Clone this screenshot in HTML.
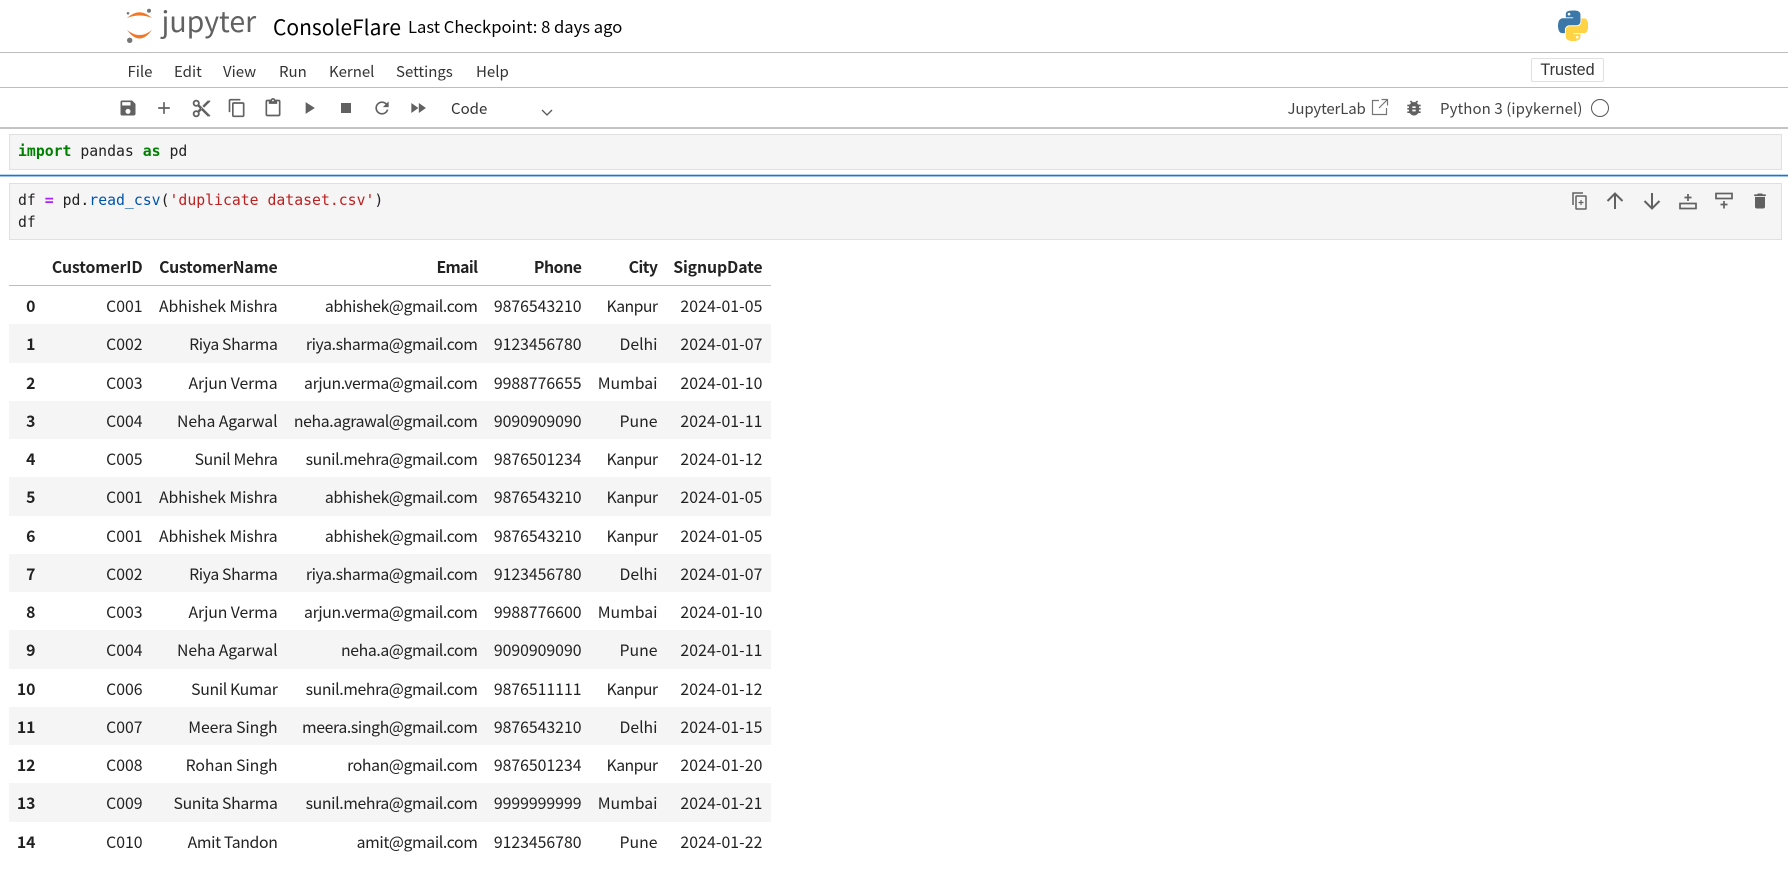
<!DOCTYPE html>
<html><head><meta charset="utf-8"><title>ConsoleFlare</title>
<style>
html,body{margin:0;padding:0;background:#fff;width:1788px;height:871px;overflow:hidden}
body{position:relative;font-family:"Noto Sans CJK JP","Liberation Sans",sans-serif;color:#333}
.t{position:absolute;white-space:nowrap}
.ln{position:absolute;left:0;width:1788px;height:1px;background:#bdbdbd}
svg.i{position:absolute;width:20px;height:20px;fill:#616161}
.cell{position:absolute;left:9px;width:1773px;background:#f5f5f5;border:1px solid #e0e0e0;box-sizing:border-box}
.code{position:absolute;left:18px;font:14.8px/22px "DejaVu Sans Mono",monospace;color:#222;white-space:pre}
.k{color:#008000;font-weight:bold}.o{color:#aa22ff;font-weight:bold}.f{color:#0055aa}.s{color:#ba2121}
.m{font-size:15px;top:60px;line-height:24px}
.r{position:absolute;left:9px;width:762px;height:38.25px;display:flex;line-height:39px;font-size:15.8px;color:#222}
.r span{display:block;text-align:right;padding-right:7.5px;box-sizing:border-box;white-space:nowrap}
.r span:nth-child(1){width:34px;font-weight:bold}
.r span:nth-child(2){width:107px}
.r span:nth-child(3){width:135px;letter-spacing:-.1px}
.r span:nth-child(4){width:200px;letter-spacing:-.37px}
.r span:nth-child(5){width:104px}
.r span:nth-child(6){width:76px}
.r span:nth-child(7){width:105px;letter-spacing:.1px}
.r span.b{letter-spacing:-.35px}
.r span.kp{letter-spacing:-.55px}
.h span{font-weight:bold}
.e{background:#f5f5f5}
</style></head><body>

<svg style="position:absolute;left:120px;top:4px" width="40" height="44" viewBox="120 4 40 44">
<path d="M127 18Q139.500 6.500 152 18Q139.500 13 127 18Z" fill="#f37726"/>
<path d="M127 30Q139.500 47 152 30Q139.500 40 127 30Z" fill="#f37726"/>
<circle cx="149" cy="10.700" r="2" fill="#767677"/><circle cx="128" cy="13.300" r="1.300" fill="#767677"/><circle cx="129.700" cy="40.300" r="2.700" fill="#767677"/>
</svg>
<div class="t" style="left:161.500px;top:-1.500px;font:28.500px/44px 'Noto Sans CJK JP',sans-serif;color:#616161">jupyter</div>
<div class="t" style="left:273px;top:12px;font-size:21px;line-height:31px;color:#000">ConsoleFlare</div>
<div class="t" style="left:408px;top:13px;font-size:16.600px;line-height:27px;color:#000">Last Checkpoint: 8 days ago</div>

<svg style="position:absolute;left:1558px;top:10px" width="30" height="31" viewBox="0 0 110 110">
<path fill="#3b77a8" d="M54.920 0c-4.580.020-8.960.410-12.810 1.090-11.340 2-13.400 6.200-13.400 13.930v10.210h26.810v3.400H18.660c-7.790 0-14.620 4.690-16.750 13.590-2.460 10.210-2.570 16.570 0 27.220 1.910 7.930 6.460 13.590 14.250 13.590h9.220V70.750c0-8.850 7.660-16.660 16.750-16.660h26.780c7.450 0 13.400-6.140 13.400-13.630V14.920c0-7.270-6.130-12.730-13.400-13.930C64.280.200 59.500-.020 54.920 0zM40.420 8.220c2.770 0 5.030 2.300 5.030 5.130 0 2.820-2.260 5.100-5.030 5.100-2.780 0-5.030-2.280-5.030-5.100 0-2.830 2.250-5.130 5.030-5.130z"/>
<path fill="#ffd343" d="M85.640 28.660v11.910c0 9.230-7.830 17-16.750 17H42.110c-7.330 0-13.400 6.280-13.400 13.630v25.530c0 7.270 6.320 11.540 13.400 13.630 8.480 2.490 16.620 2.940 26.780 0 6.750-1.960 13.400-5.890 13.400-13.630V86.500H55.510v-3.400h40.180c7.790 0 10.690-5.430 13.400-13.590 2.800-8.400 2.680-16.480 0-27.220-1.930-7.740-5.600-13.590-13.400-13.590zM70.560 93.200c2.780 0 5.030 2.270 5.030 5.100 0 2.830-2.250 5.130-5.030 5.130-2.770 0-5.030-2.300-5.030-5.130 0-2.830 2.260-5.100 5.030-5.100z"/>
</svg>

<div class="ln" style="top:52px"></div>
<div class="t m" style="left:127.500px">File</div>
<div class="t m" style="left:174px">Edit</div>
<div class="t m" style="left:223px">View</div>
<div class="t m" style="left:279px">Run</div>
<div class="t m" style="left:329px">Kernel</div>
<div class="t m" style="left:396px">Settings</div>
<div class="t m" style="left:476px">Help</div>
<div style="position:absolute;left:1531px;top:58px;width:73px;height:24px;box-sizing:border-box;border:1px solid #e0e0e0;border-radius:2px;font:16.200px/22px 'Liberation Sans',sans-serif;text-align:center;color:#333">Trusted</div>
<div class="ln" style="top:87px"></div>

<svg class="i" style="left:118px;top:98px" viewBox="0 0 24 24"><path d="M17 3H5a2 2 0 0 0-2 2v14a2 2 0 0 0 2 2h14c1.100 0 2-.9 2-2V7l-4-4zm-5 16c-1.660 0-3-1.340-3-3s1.340-3 3-3 3 1.340 3 3-1.340 3-3 3zm3-10H5V5h10v4z"/></svg>
<svg class="i" style="left:154px;top:98px" viewBox="0 0 24 24"><path d="M19 13h-6v6h-2v-6H5v-2h6V5h2v6h6v2z"/></svg>
<svg class="i" style="left:190.500px;top:97.500px;width:21px;height:21px" viewBox="0 0 24 24"><path d="M9.640 7.640c.23-.5.36-1.050.36-1.640 0-2.210-1.790-4-4-4S2 3.790 2 6s1.790 4 4 4c.59 0 1.140-.13 1.640-.36L10 12l-2.360 2.360C7.140 14.130 6.590 14 6 14c-2.210 0-4 1.790-4 4s1.790 4 4 4 4-1.790 4-4c0-.59-.13-1.140-.36-1.640L12 14l7 7h3v-1L9.640 7.640zM6 8c-1.100 0-2-.89-2-2s.9-2 2-2 2 .89 2 2-.9 2-2 2zm0 12c-1.100 0-2-.89-2-2s.9-2 2-2 2 .89 2 2-.9 2-2 2zm6-7.500c-.28 0-.5-.22-.5-.5s.22-.5.5-.5.5.22.5.5-.22.5-.5.5zM19 3l-6 6 2 2 7-7V3z"/></svg>
<svg class="i" style="left:227px;top:98px" viewBox="0 0 24 24"><path d="M16 1H4c-1.100 0-2 .9-2 2v14h2V3h12V1zm3 4H8c-1.100 0-2 .9-2 2v14c0 1.100.9 2 2 2h11c1.100 0 2-.9 2-2V7c0-1.100-.9-2-2-2zm0 16H8V7h11v14z"/></svg>
<svg class="i" style="left:263px;top:98px" viewBox="0 0 24 24"><path d="M19 2h-4.180C14.400.84 13.300 0 12 0c-1.300 0-2.400.84-2.820 2H5c-1.100 0-2 .9-2 2v16c0 1.100.9 2 2 2h14c1.100 0 2-.9 2-2V4c0-1.100-.9-2-2-2zm-7 0c.55 0 1 .45 1 1s-.45 1-1 1-1-.45-1-1 .45-1 1-1zm7 18H5V4h2v3h10V4h2v16z"/></svg>
<svg class="i" style="left:299px;top:98px" viewBox="0 0 24 24"><path d="M8 5v14l11-7z"/></svg>
<svg class="i" style="left:336px;top:98px" viewBox="0 0 24 24"><path d="M6 6h12v12H6z"/></svg>
<svg class="i" style="left:372px;top:98px" viewBox="0 0 24 24"><path d="M17.650 6.350A7.958 7.958 0 0 0 12 4c-4.420 0-7.990 3.580-7.990 8s3.570 8 7.990 8c3.730 0 6.840-2.550 7.730-6h-2.080A5.990 5.990 0 0 1 12 18c-3.310 0-6-2.690-6-6s2.690-6 6-6c1.660 0 3.140.69 4.220 1.780L13 11h7V4l-2.350 2.350z"/></svg>
<svg class="i" style="left:408px;top:98px" viewBox="0 0 24 24"><path d="M4 18l8.500-6L4 6v12zm9-12v12l8.500-6L13 6z"/></svg>
<div class="t" style="left:451px;top:97px;font-size:15px;line-height:24px">Code</div>
<svg style="position:absolute;left:541px;top:109px" width="12" height="8" viewBox="0 0 12 8"><path d="M1 1l5 5 5-5" fill="none" stroke="#555" stroke-width="1.300"/></svg>

<div class="t" style="left:1287.500px;top:97px;font-size:15px;line-height:24px;color:#444;letter-spacing:-.15px">JupyterLab</div>
<svg style="position:absolute;left:1371px;top:98px" width="18" height="18" viewBox="0 0 18 18"><path d="M8 2.500H1.500v14h14V10M10.500 1.500h6v6M16.500 1.500L8 10" fill="none" stroke="#757575" stroke-width="1.200"/></svg>
<svg class="i" style="left:1404px;top:98px" viewBox="0 0 24 24"><path d="M20 8h-2.810c-.45-.78-1.070-1.450-1.820-1.960L17 4.410 15.590 3l-2.170 2.170C12.960 5.060 12.490 5 12 5c-.49 0-.96.06-1.410.17L8.410 3 7 4.410l1.620 1.630C7.880 6.550 7.260 7.220 6.810 8H4v2h2.090c-.05.33-.09.66-.09 1v1H4v2h2v1c0 .34.04.67.09 1H4v2h2.810c1.040 1.790 2.970 3 5.190 3s4.150-1.210 5.190-3H20v-2h-2.090c.05-.33.09-.66.09-1v-1h2v-2h-2v-1c0-.34-.04-.67-.09-1H20V8zm-6 8h-4v-2h4v2zm0-4h-4v-2h4v2z"/></svg>
<div class="t" style="left:1440px;top:97px;font-size:15px;line-height:24px;color:#444;letter-spacing:.1px">Python 3 (ipykernel)</div>
<div style="position:absolute;left:1591px;top:99px;width:18px;height:18px;box-sizing:border-box;border:1.500px solid #555;border-radius:50%"></div>
<div class="ln" style="top:127px;background:#c4c4c4;height:1.500px"></div>

<div class="cell" style="top:134px;height:36px"></div>
<div class="code" style="top:141px"><span class="k">import</span> pandas <span class="k">as</span> pd</div>
<div style="position:absolute;left:0;top:174px;width:1788px;height:1px;background:#b9d6f2"></div>
<div style="position:absolute;left:0;top:175px;width:1788px;height:1px;background:#1976d2"></div>
<div style="position:absolute;left:0;top:176px;width:1788px;height:1px;background:#9cc4ec"></div>
<div class="cell" style="top:183px;height:57px"></div>
<div class="code" style="top:190px">df <span class="o">=</span> pd.<span class="f">read_csv</span>(<span class="s">'duplicate dataset.csv'</span>)
df</div>

<svg style="position:absolute;left:1570px;top:191px" width="20" height="20" viewBox="0 0 20 20" fill="none" stroke="#616161" stroke-width="1.500"><path d="M13 2H3v12"/><rect x="6" y="5" width="10" height="13" rx=".5"/><path d="M11 9v5M8.500 11.500h5" stroke-width="1.200"/></svg>
<svg style="position:absolute;left:1605px;top:191px" width="20" height="20" viewBox="0 0 20 20" fill="none" stroke="#616161" stroke-width="2"><path d="M10 18V3M2.500 10L10 2.500 17.500 10"/></svg>
<svg style="position:absolute;left:1642px;top:191px" width="20" height="20" viewBox="0 0 20 20" fill="none" stroke="#616161" stroke-width="2"><path d="M10 2v15M2.500 10L10 17.500 17.500 10"/></svg>
<svg style="position:absolute;left:1678px;top:191px" width="20" height="20" viewBox="0 0 20 20" fill="none" stroke="#616161" stroke-width="1.700"><rect x="2" y="12.500" width="16" height="5"/><path d="M10 3v7M6.500 6.500h7"/></svg>
<svg style="position:absolute;left:1714px;top:191px" width="20" height="20" viewBox="0 0 20 20" fill="none" stroke="#616161" stroke-width="1.700"><rect x="2" y="2.500" width="16" height="5"/><path d="M10 10v7.500M6.500 13.500h7"/></svg>
<svg class="i" style="left:1750px;top:191px" viewBox="0 0 24 24"><path d="M6 19c0 1.100.9 2 2 2h8c1.100 0 2-.9 2-2V7H6v12zM19 4h-3.500l-1-1h-5l-1 1H5v2h14V4z"/></svg>

<div class="r h" style="top:247px"><span></span><span style="letter-spacing:-.11px">CustomerID</span><span style="letter-spacing:-.2px">CustomerName</span><span style="letter-spacing:-.6px">Email</span><span style="letter-spacing:-.45px">Phone</span><span style="letter-spacing:-.5px">City</span><span style="letter-spacing:-.1px">SignupDate</span></div>
<div style="position:absolute;left:9px;top:285px;width:762px;height:1px;background:#bdbdbd"></div>

<div class="r" style="top:286px"><span>0</span><span>C001</span><span>Abhishek Mishra</span><span>abhishek@gmail.com</span><span>9876543210</span><span class="kp">Kanpur</span><span>2024-01-05</span></div>
<div class="r e" style="top:324.250px"><span>1</span><span>C002</span><span class="b">Riya Sharma</span><span>riya.sharma@gmail.com</span><span>9123456780</span><span>Delhi</span><span>2024-01-07</span></div>
<div class="r" style="top:362.500px"><span>2</span><span>C003</span><span>Arjun Verma</span><span>arjun.verma@gmail.com</span><span>9988776655</span><span>Mumbai</span><span>2024-01-10</span></div>
<div class="r e" style="top:400.750px"><span>3</span><span>C004</span><span>Neha Agarwal</span><span>neha.agrawal@gmail.com</span><span>9090909090</span><span>Pune</span><span>2024-01-11</span></div>
<div class="r" style="top:439px"><span>4</span><span>C005</span><span class="b">Sunil Mehra</span><span>sunil.mehra@gmail.com</span><span>9876501234</span><span class="kp">Kanpur</span><span>2024-01-12</span></div>
<div class="r e" style="top:477.250px"><span>5</span><span>C001</span><span>Abhishek Mishra</span><span>abhishek@gmail.com</span><span>9876543210</span><span class="kp">Kanpur</span><span>2024-01-05</span></div>
<div class="r" style="top:515.500px"><span>6</span><span>C001</span><span>Abhishek Mishra</span><span>abhishek@gmail.com</span><span>9876543210</span><span class="kp">Kanpur</span><span>2024-01-05</span></div>
<div class="r e" style="top:553.750px"><span>7</span><span>C002</span><span class="b">Riya Sharma</span><span>riya.sharma@gmail.com</span><span>9123456780</span><span>Delhi</span><span>2024-01-07</span></div>
<div class="r" style="top:592px"><span>8</span><span>C003</span><span>Arjun Verma</span><span>arjun.verma@gmail.com</span><span>9988776600</span><span>Mumbai</span><span>2024-01-10</span></div>
<div class="r e" style="top:630.250px"><span>9</span><span>C004</span><span>Neha Agarwal</span><span>neha.a@gmail.com</span><span>9090909090</span><span>Pune</span><span>2024-01-11</span></div>
<div class="r" style="top:668.500px"><span>10</span><span>C006</span><span class="b">Sunil Kumar</span><span>sunil.mehra@gmail.com</span><span>9876511111</span><span class="kp">Kanpur</span><span>2024-01-12</span></div>
<div class="r e" style="top:706.750px"><span>11</span><span>C007</span><span>Meera Singh</span><span>meera.singh@gmail.com</span><span>9876543210</span><span>Delhi</span><span>2024-01-15</span></div>
<div class="r" style="top:745px"><span>12</span><span>C008</span><span>Rohan Singh</span><span>rohan@gmail.com</span><span>9876501234</span><span class="kp">Kanpur</span><span>2024-01-20</span></div>
<div class="r e" style="top:783.250px"><span>13</span><span>C009</span><span class="b">Sunita Sharma</span><span>sunil.mehra@gmail.com</span><span>9999999999</span><span>Mumbai</span><span>2024-01-21</span></div>
<div class="r" style="top:821.500px"><span>14</span><span>C010</span><span class="b">Amit Tandon</span><span>amit@gmail.com</span><span>9123456780</span><span>Pune</span><span>2024-01-22</span></div>
</body></html>
